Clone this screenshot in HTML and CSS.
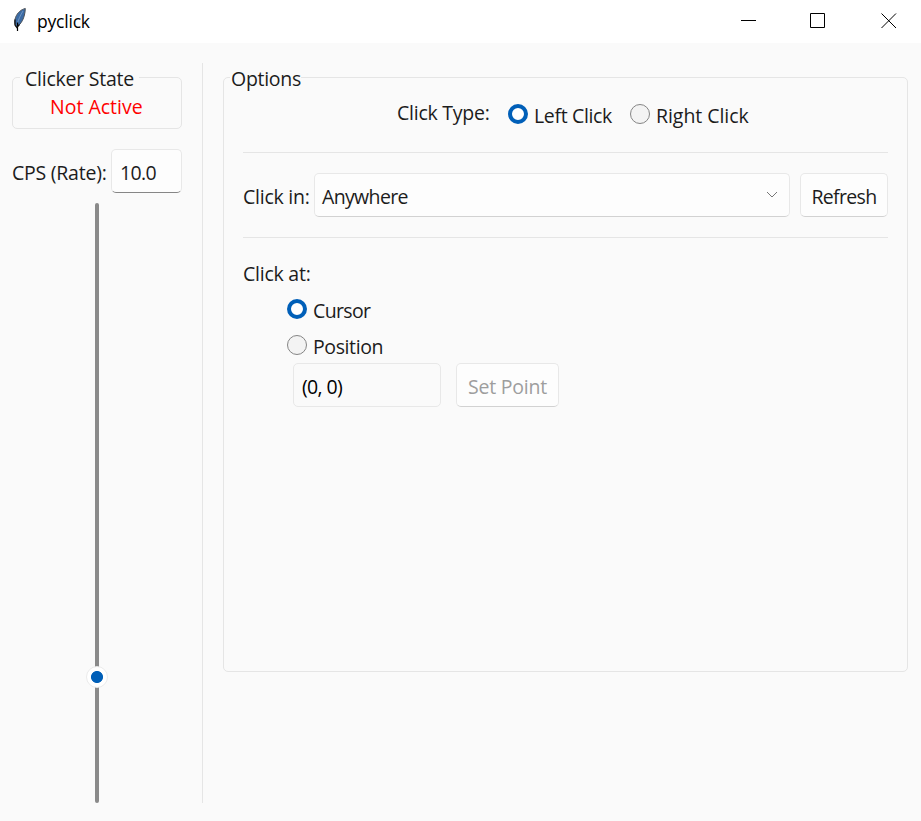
FILE: index.html
```html
<!DOCTYPE html>
<html lang="en">
<head>
<meta charset="utf-8">
<title>pyclick</title>
<link rel="stylesheet" href="styles.css">
</head>
<body>
<header class="titlebar">
  <svg class="feather" width="16" height="26" viewBox="0 0 16 26">
    <path d="M13.3 1.500C9 2.500 5.500 5.500 3.500 10.500C2.200 14.500 2.500 17.500 4.500 20C9 17.500 13 11 13.300 1.500Z" fill="#3b6ba5" stroke="#4b5056" stroke-width="1"/>
    <path d="M11 4C8.500 8 6.500 12 5 18" fill="none" stroke="#7da0c8" stroke-width=".8"/>
    <path d="M5.500 15.500V24" stroke="#000" stroke-width="1.200"/>
    <path d="M3 12.500V18L4.800 20.500L7.500 17.500" fill="none" stroke="#111" stroke-width="1.200"/>
  </svg>
  <span class="title">pyclick</span>
  <svg class="controls" width="156" height="16" viewBox="0 0 156 16" fill="none" stroke="#000">
    <path d="M0 7.500H15M69.500 .5H83.500V14.500H69.500ZM140.500 .5L155 15M155 .5L140.500 15"/>
  </svg>
</header>
<main class="window">
  <aside class="side">
    <section class="frame state">
      <h2 class="legend t-state">Clicker State</h2>
      <span class="status">Not Active</span>
    </section>
    <div class="rate">
      <label class="t-rate">CPS (Rate):</label>
      <div class="field entry"><span class="t-num">10.0</span></div>
    </div>
    <div class="slider"><i class="knob"></i></div>
  </aside>
  <section class="frame options">
    <h2 class="legend t-options">Options</h2>
    <div class="types">
      <span class="type-label">Click Type:</span>
      <label class="radio"><i class="dot on"></i><span class="t-left">Left Click</span></label>
      <label class="radio"><i class="dot"></i><span class="t-right">Right Click</span></label>
    </div>
    <div class="target">
      <label class="t-in">Click in:</label>
      <div class="field select"><span class="t-any">Anywhere</span>
        <svg width="12" height="8" viewBox="0 0 12 8"><path d="M1 1L6 6L11 1" fill="none" stroke="#777"/></svg>
      </div>
      <div class="field button"><span class="t-refresh">Refresh</span></div>
    </div>
    <div class="place">
      <span class="t-at">Click at:</span>
      <label class="radio"><i class="dot on"></i><span class="t-cursor">Cursor</span></label>
      <label class="radio"><i class="dot"></i><span class="t-position">Position</span></label>
      <div class="point">
        <div class="field coords"><span class="t-coords">(0, 0)</span></div>
        <div class="field button disabled"><span class="t-set">Set Point</span></div>
      </div>
    </div>
  </section>
</main>
</body>
</html>
```
FILE: styles.css
```css
* { box-sizing: border-box; }
body { margin: 0; width: 921px; height: 821px; overflow: hidden; background: #fafafa; color: #1c1c1c; font: 19.5px/26px "Open Sans", "Noto Sans", sans-serif; letter-spacing: -.65px; white-space: nowrap; }
.titlebar { display: flex; height: 43px; background: #fff; padding: 7px 24px 0 12px; }
.title { color: #000; font-size: 17.5px; margin: 1px auto 0 9px; letter-spacing: -.2px; }
.controls { margin-top: 6px; }
.window { display: flex; height: 778px; padding: 20px 13px 18px 12px; }
.side { width: 191px; padding: 14px 20px 0 0; border-right: 1px solid #e5e5e5; display: flex; flex-direction: column; }
.frame { border: 1px solid #e5e5e5; border-radius: 5px; }
.legend { font: inherit; margin: -12px 0 0; width: max-content; background: #fafafa; height: 26px; }
.state { height: 52px; }
.state .legend { margin-left: 7px; padding: 0 5px; }
.status { display: block; color: #f00; margin: 2px 0 0 37px; letter-spacing: 0; }
.rate { display: flex; justify-content: space-between; height: 44px; margin-top: 20px; }
.rate label { padding-top: 11px; }
.field { display: flex; height: 44px; border: 1px solid #e8e8e8; border-bottom-color: #d2d2d2; border-radius: 5px; background: #fdfdfd; padding-top: 10px; }
.entry { width: 71px; padding-left: 8px; border-bottom-color: #868686; }
.slider { position: relative; width: 4px; height: 600px; margin: 10px 0 0 83px; border-radius: 2px; background: #8a8a8a; }
.knob { position: absolute; left: -9px; top: 463px; width: 22px; height: 22px; border: 1px solid #ebebeb; border-radius: 50%; background: radial-gradient(circle, #005fb8 5.600px, #fff 6.400px); }
.options { width: 685px; height: 595px; margin: 14px 0 0 20px; padding: 0 19px; }
.options .legend { margin-left: -13px; padding-left: 1px; }
.types { display: flex; height: 63px; padding: 11px 0 0 154px; border-bottom: 1px solid #e5e5e5; margin-bottom: 20px; margin-top: -2px; }
.type-label { width: 111px; margin-top: -1px; }
.types .radio { width: 122px; padding-top: 3px; }
.radio { display: flex; padding-top: 2px; gap: 6px; }
.radio span { margin-top: -1px; }
.dot { width: 20px; height: 20px; flex: none; border: 1px solid #858585; border-radius: 50%; background: #f3f3f3; }
.dot.on { border: 4px solid #005fb8; background: #fff; }
.target { display: flex; height: 65px; border-bottom: 1px solid #e5e5e5; }
.target > label { width: 71px; padding-top: 11px; }
.select { width: 476px; margin-right: 10px; padding-left: 7px; justify-content: space-between; padding-right: 11px; }
.select svg { margin-top: 7px; }
.button { justify-content: center; width: 88px; }
.place { display: flex; flex-direction: column; padding-top: 23px; }
.place .radio { margin-left: 44px; height: 26px; margin-top: 10px; }
.point { display: flex; gap: 15px; margin: 4px 0 0 50px; }
.coords { width: 148px; background: #fafafa; border-bottom-color: #e8e8e8; padding-left: 8px; color: #000; }
.disabled { width: 103px; color: #9e9e9e; }
.t-state, .t-rate, .type-label, .t-in, .t-at, .t-set { letter-spacing: -.24px; }
.t-options { letter-spacing: -.28px; }
.t-left { letter-spacing: -.35px; }
.t-right { letter-spacing: -.05px; }
.t-position { letter-spacing: -.4px; }
```
